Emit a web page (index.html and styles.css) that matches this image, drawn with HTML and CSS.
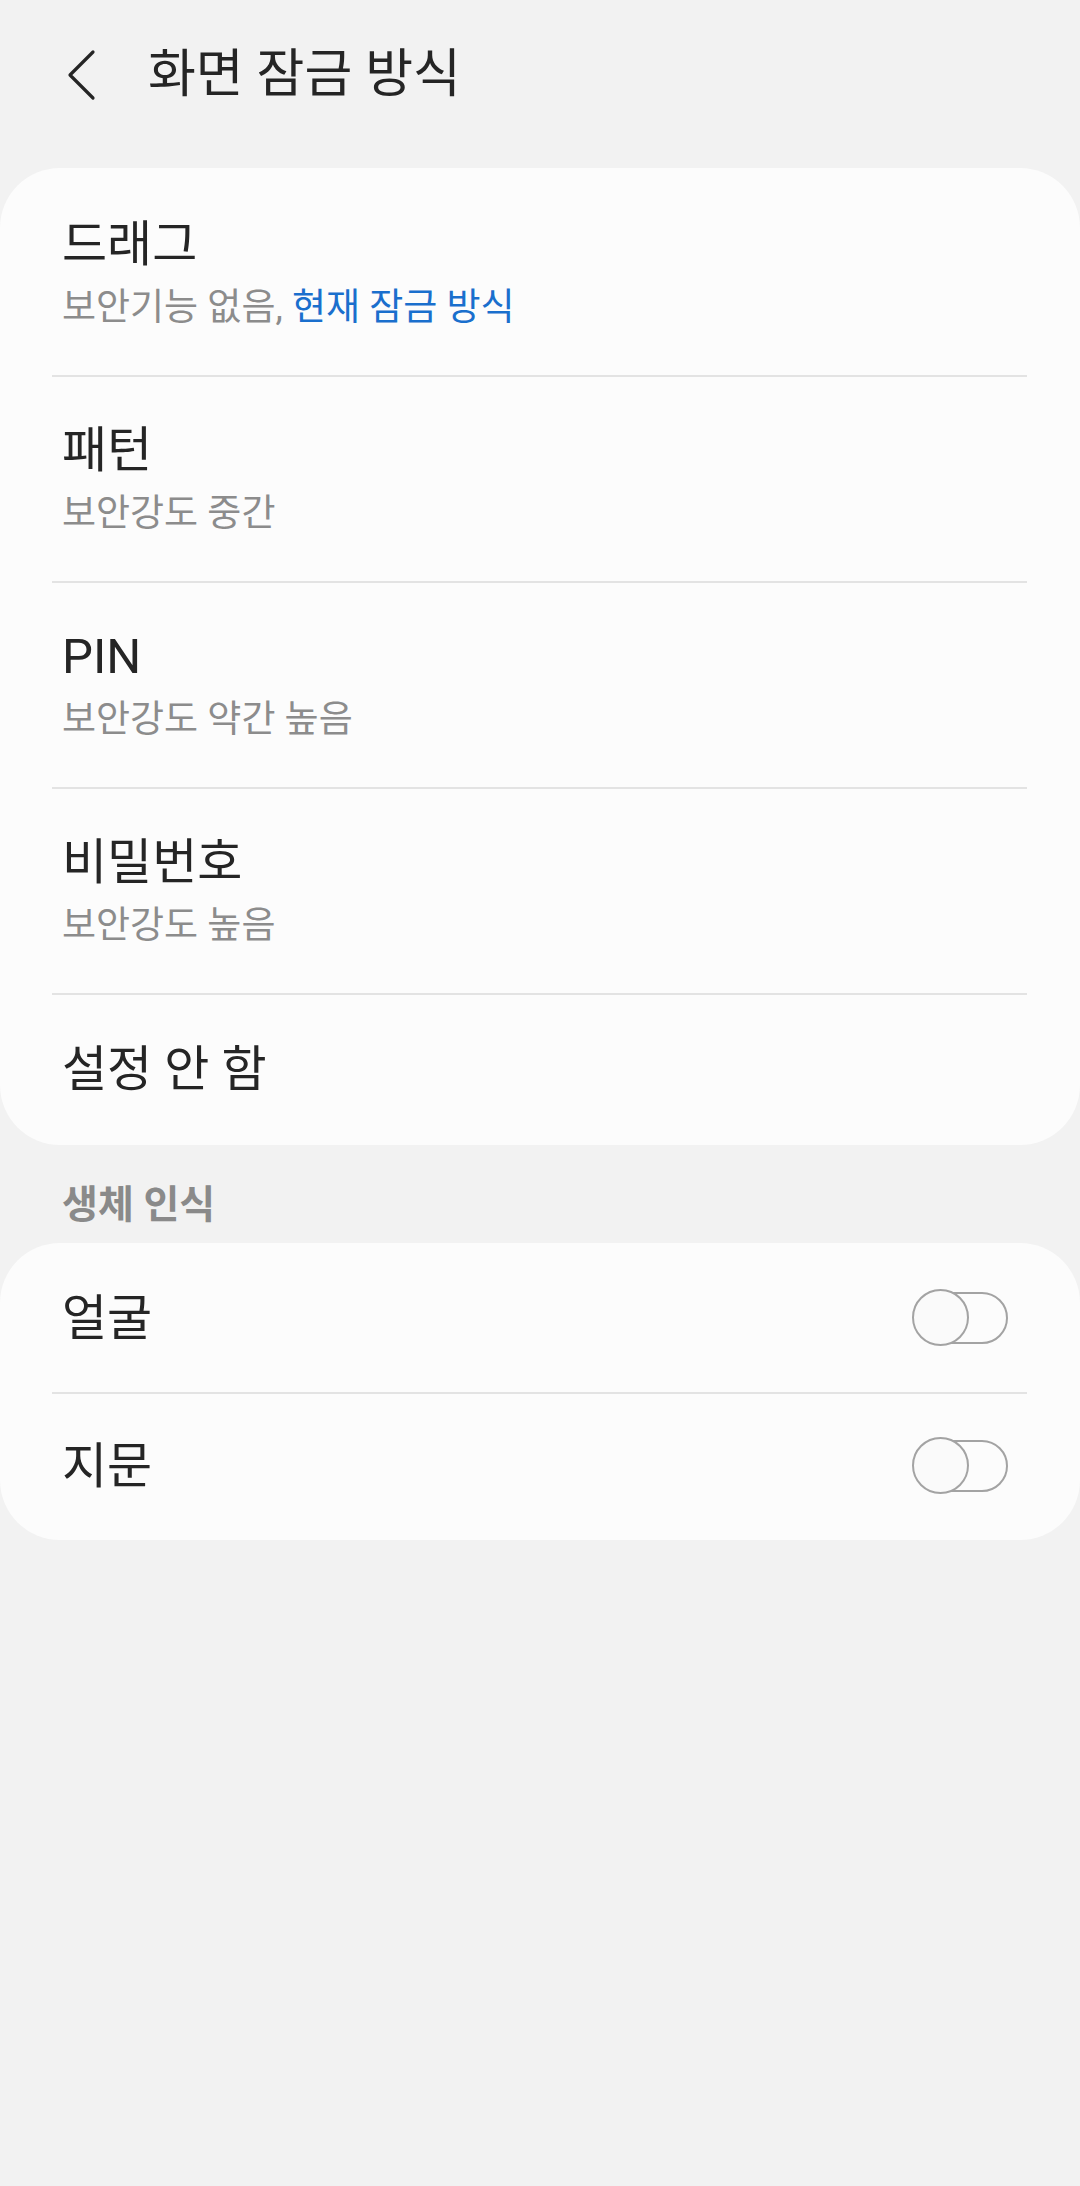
FILE: index.html
```html
<!DOCTYPE html>
<html lang="ko">
<head>
<meta charset="UTF-8">
<meta name="viewport" content="width=device-width, initial-scale=1.0">
<title>화면 잠금 방식</title>
<link rel="stylesheet" href="styles.css">
</head>
<body>
<div class="topbar">
  <button class="back" aria-label="뒤로">
    <svg width="30" height="52" viewBox="0 0 30 52">
      <polyline points="26,3 3,26 26,49" fill="none" stroke="#252525" stroke-width="3.2" stroke-linecap="round" stroke-linejoin="round"/>
    </svg>
  </button>
  <h1 class="title">화면 잠금 방식</h1>
</div>

<div class="card">
  <div class="row two">
    <div class="main">드래그</div>
    <div class="sub">보안기능 없음, <span class="current">현재 잠금 방식</span></div>
  </div>
  <div class="divider"></div>
  <div class="row two">
    <div class="main">패턴</div>
    <div class="sub">보안강도 중간</div>
  </div>
  <div class="divider"></div>
  <div class="row two">
    <div class="main">PIN</div>
    <div class="sub">보안강도 약간 높음</div>
  </div>
  <div class="divider"></div>
  <div class="row two">
    <div class="main">비밀번호</div>
    <div class="sub">보안강도 높음</div>
  </div>
  <div class="divider"></div>
  <div class="row one">
    <div class="main">설정 안 함</div>
  </div>
</div>

<div class="section">생체 인식</div>

<div class="card">
  <div class="row switch-row">
    <div class="main">얼굴</div>
    <span class="switch"><span class="knob"></span></span>
  </div>
  <div class="divider"></div>
  <div class="row switch-row">
    <div class="main">지문</div>
    <span class="switch"><span class="knob"></span></span>
  </div>
</div>
</body>
</html>
```

FILE: styles.css
```css
body {
  margin: 0;
  background-color: #f2f2f2;
  font-family: Roboto, "Noto Sans CJK KR", sans-serif;
  color: #252525;
  min-height: 2186px;
}

.topbar {
  height: 168px;
  display: flex;
  align-items: center;
  padding-bottom: 18px;
  box-sizing: border-box;
}

.back {
  background: none;
  border: none;
  padding: 0;
  margin-left: 67px;
  width: 30px;
  height: 52px;
  display: flex;
}

.title {
  margin: 0 0 0 51px;
  font-size: 52px;
  font-weight: 400;
  line-height: 64px;
}

.card {
  background-color: #fcfcfc;
  border-radius: 60px;
  padding-top: 3px;
}

.row {
  padding: 0 72px 0 62px;
  display: flex;
}

.row.two {
  height: 204px;
  flex-direction: column;
  justify-content: center;
}

.row.one {
  height: 150px;
  align-items: center;
}

.row.switch-row {
  height: 146px;
  align-items: center;
  justify-content: space-between;
}

.main {
  font-size: 49px;
  line-height: 60px;
}

.sub {
  font-size: 37px;
  line-height: 46px;
  margin-top: 10px;
  color: #8c8c8c;
}

.current {
  color: #1a6fcd;
}

.divider {
  height: 2px;
  background-color: #e3e3e3;
  margin: 0 53px 0 52px;
}

.section {
  height: 98px;
  box-sizing: border-box;
  padding: 14px 0 0 62px;
  display: flex;
  align-items: center;
  font-size: 39px;
  font-weight: 700;
  color: #8a8a8a;
}

.switch {
  position: relative;
  width: 96px;
  height: 57px;
  flex-shrink: 0;
  margin-top: -3px;
}

.switch::before {
  content: "";
  position: absolute;
  left: 4px;
  right: 0;
  top: 3px;
  height: 52px;
  box-sizing: border-box;
  border: 2.5px solid #a3a3a3;
  border-radius: 26px;
}

.knob {
  position: absolute;
  left: 0;
  top: 0;
  width: 57px;
  height: 57px;
  box-sizing: border-box;
  border: 2.5px solid #a3a3a3;
  border-radius: 50%;
  background-color: #fafafa;
}
```
